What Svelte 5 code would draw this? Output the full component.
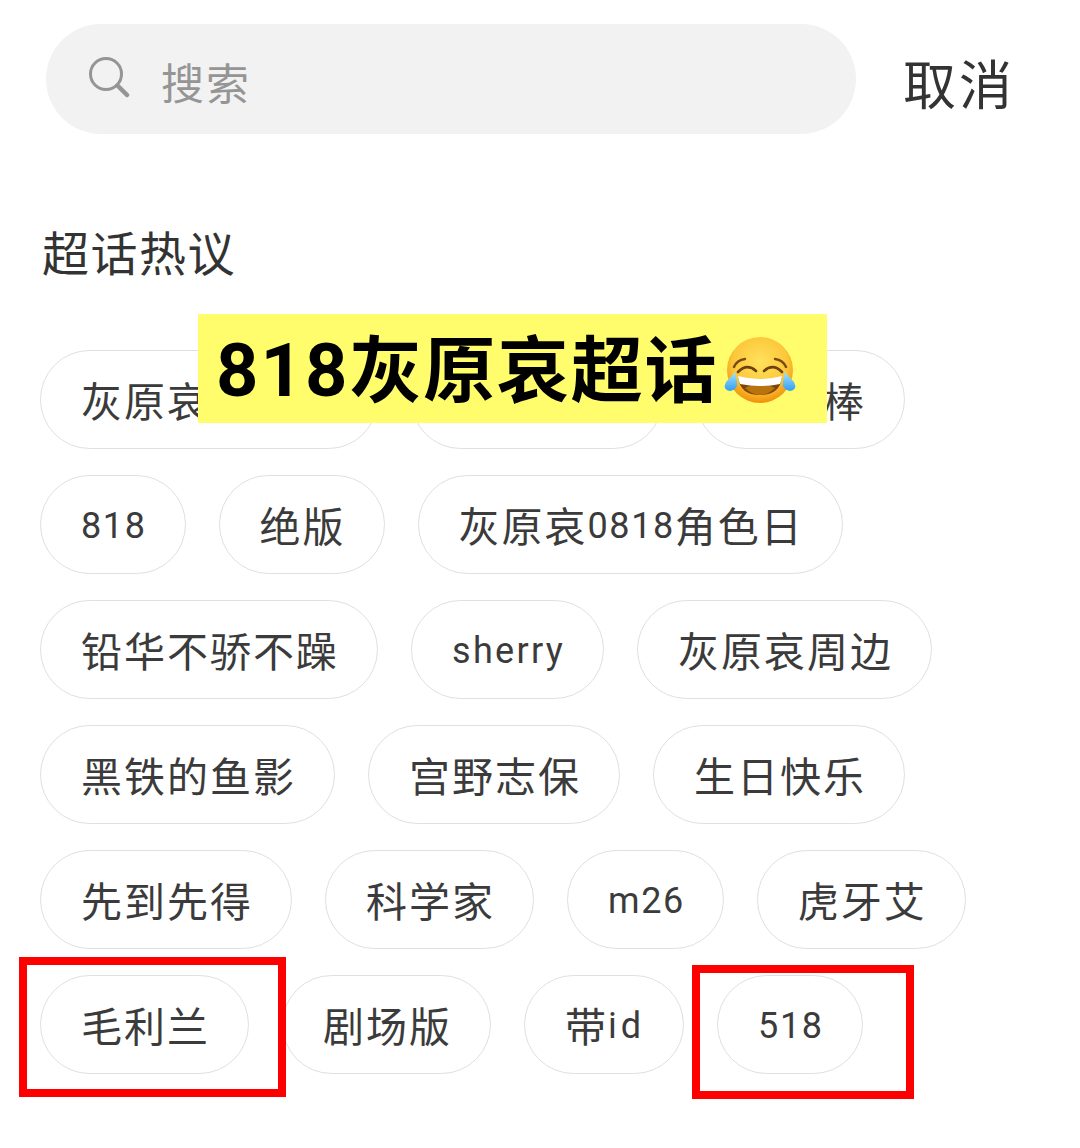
<script>
  const rows = [
    ['灰原哀表情包', '原哀手办', '真的棒'],
    ['818', '绝版', '灰原哀0818角色日'],
    ['铅华不骄不躁', 'sherry', '灰原哀周边'],
    ['黑铁的鱼影', '宫野志保', '生日快乐'],
    ['先到先得', '科学家', 'm26', '虎牙艾'],
    ['毛利兰', '剧场版', '带id', '518']
  ];
  const split = (s) => s.match(/[\x00-\x7f]+|[^\x00-\x7f]+/g);
  const isLatin = (s) => /^[\x00-\x7f]/.test(s);
</script>

<div class="page">
  <header class="top">
    <div class="search">
      <svg class="glass" viewBox="0 0 42 42" width="42" height="42" aria-hidden="true">
        <circle cx="18" cy="18" r="15.5" fill="none" stroke="#959595" stroke-width="3" />
        <path d="M29.5 29.5 L39 39" fill="none" stroke="#959595" stroke-width="4.5" stroke-linecap="round" />
      </svg>
      <span class="ph">搜索</span>
    </div>
    <span class="cancel">取消</span>
  </header>

  <h2 class="title">超话热议</h2>

  <div class="tags">
    {#each rows as row}
      <div class="row">
        {#each row as t}
          <span class="tag">
            {#each split(t) as part}<span class:lat={isLatin(part)} class:cjk={!isLatin(part)} class:sp={part === 'sherry'} class:wide={part === 'id'}>{part}</span>{/each}
          </span>
        {/each}
      </div>
    {/each}
  </div>

  <div class="banner">
    <span class="b-text"><span class="b-lat">818</span>灰原哀超话</span>
    <svg class="emoji" viewBox="0 0 84 80" width="84" height="80" aria-hidden="true">
      <defs>
        <radialGradient id="face" cx="50%" cy="38%" r="60%">
          <stop offset="0%" stop-color="#ffe25c" />
          <stop offset="70%" stop-color="#fcc63a" />
          <stop offset="100%" stop-color="#f2950f" />
        </radialGradient>
        <linearGradient id="tear" x1="0" y1="0" x2="0" y2="1">
          <stop offset="0%" stop-color="#a8e2fb" />
          <stop offset="100%" stop-color="#2f9ff0" />
        </linearGradient>
      </defs>
      <circle cx="40" cy="40" r="33" fill="url(#face)" />
      <path d="M14 37 Q17 30 25 29 M66 37 Q63 30 55 29" fill="none" stroke="#7a4a12" stroke-width="2.4" stroke-linecap="round" />
      <path d="M18 42 Q27 33 36 41 M44 41 Q53 33 62 42" fill="none" stroke="#6d4010" stroke-width="2.6" stroke-linecap="round" />
      <path d="M18 47 Q40 54 62 47 Q60 65 40 65 Q20 65 18 47 Z" fill="#7c4608" />
      <path d="M25 58 Q40 50 55 58 Q48 65 40 65 Q32 65 25 58 Z" fill="#b8730f" />
      <path d="M18 46 Q40 52 62 46 Q62 50 60 54 Q40 58 20 54 Q18 50 18 46 Z" fill="#fff" />
      <path d="M15 42 Q10 48 6 52 Q2 60 10 61 Q18 60 17 52 Z" fill="url(#tear)" />
      <path d="M65 42 Q70 48 74 52 Q78 60 70 61 Q62 60 63 52 Z" fill="url(#tear)" />
    </svg>
  </div>

  <div class="mark mark-a"></div>
  <div class="mark mark-b"></div>
</div>

<style>
  :global(body) {
    margin: 0;
    background: #fff;
  }
  .page {
    position: relative;
    width: 1080px;
    height: 1148px;
    padding: 24px 40px 0;
    box-sizing: border-box;
    overflow: hidden;
    background: #fff;
    font-family: "Noto Sans CJK SC", "Noto Sans", sans-serif;
    color: #3b3b3b;
  }
  .top {
    display: flex;
    align-items: center;
    height: 110px;
    padding-left: 6px;
  }
  .search {
    display: flex;
    align-items: center;
    width: 810px;
    height: 110px;
    box-sizing: border-box;
    padding-left: 42px;
    border-radius: 55px;
    background: #f2f2f2;
  }
  .glass {
    flex: none;
    margin-top: -5px;
  }
  .ph {
    margin: 4px 0 0 31px;
    font-size: 43px;
    letter-spacing: 2px;
    line-height: 1;
    color: #959595;
  }
  .cancel {
    margin: 6px 0 0 47px;
    font-size: 53px;
    letter-spacing: 3px;
    line-height: 1;
    color: #333;
  }
  .title {
    margin: 92px 0 0 2px;
    height: 50px;
    font-size: 47px;
    font-weight: 400;
    letter-spacing: 1.5px;
    line-height: 50px;
    color: #333;
  }
  .tags {
    display: flex;
    flex-direction: column;
    gap: 26px;
    margin-top: 74px;
  }
  .row {
    display: flex;
    gap: 33px;
  }
  .tag {
    display: flex;
    align-items: center;
    height: 99px;
    box-sizing: border-box;
    padding: 0 38px 0 40px;
    border: 1px solid #e0e0e0;
    border-radius: 50px;
    font-size: 41px;
    line-height: 1;
    white-space: nowrap;
  }
  .cjk {
    letter-spacing: 2px;
  }
  .lat {
    margin-top: 3px;
    font-family: Roboto, "Noto Sans", sans-serif;
    font-size: 36px;
    letter-spacing: 1.6px;
  }
  .sp {
    letter-spacing: 2.3px;
  }
  .wide {
    letter-spacing: 4px;
  }
  .banner {
    position: absolute;
    left: 198px;
    top: 314px;
    display: flex;
    align-items: center;
    width: 629px;
    height: 109px;
    box-sizing: border-box;
    padding-left: 18px;
    background: #fffd6b;
    color: #000;
    font-size: 72px;
    font-weight: 700;
    line-height: 1;
    white-space: nowrap;
  }
  .b-text {
    letter-spacing: 1.8px;
  }
  .b-lat {
    font-family: Roboto, sans-serif;
    font-size: 74px;
    letter-spacing: 2px;
  }
  .emoji {
    flex: none;
    margin: 3px 0 0 2px;
  }
  .mark {
    position: absolute;
    box-sizing: border-box;
    border: 8px solid #fe0000;
  }
  .mark-a {
    left: 19px;
    top: 957px;
    width: 267px;
    height: 140px;
  }
  .mark-b {
    left: 692px;
    top: 965px;
    width: 222px;
    height: 134px;
  }
</style>
